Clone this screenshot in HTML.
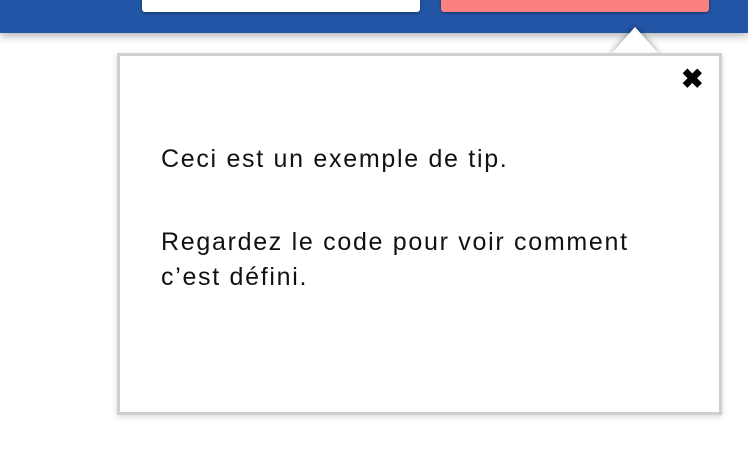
<!DOCTYPE html>
<html><head><meta charset="utf-8"><style>
body{margin:0;width:748px;height:450px;overflow:hidden;background:#fff;position:relative;font-family:"Liberation Sans",sans-serif}
.hdr{position:absolute;left:0;top:0;width:748px;height:33px;background:#2355a7;box-shadow:0 3px 8px rgba(0,0,0,.3)}
.b1{position:absolute;left:142px;top:-4px;width:278px;height:16px;background:#fff;border-radius:3px;box-shadow:0 1px 3px rgba(0,0,0,.4)}
.b2{position:absolute;left:441px;top:-4px;width:268px;height:16px;background:#fb8181;border-radius:3px;box-shadow:0 1px 3px rgba(0,0,0,.4)}
.box{position:absolute;left:117px;top:53px;width:599px;height:356px;background:#fff;border:3px solid #cfcfcf;box-shadow:0 2px 6px rgba(0,0,0,.15)}
.arrow{position:absolute;left:611px;top:27px;width:0;height:0;border-left:24px solid transparent;border-right:24px solid transparent;border-bottom:27px solid #fff;filter:drop-shadow(0 -1px 3px rgba(0,0,0,.35))}
.x{position:absolute;left:681px;top:64px;font-size:27px;font-weight:bold;color:#000;line-height:30px}
.t{position:absolute;left:161px;font-size:25px;letter-spacing:1.7px;color:#111;line-height:35px}
</style></head><body>
<div class="hdr"><div class="b1"></div><div class="b2"></div></div>
<div class="arrow"></div>
<div class="box"></div>
<div class="x">✖</div>
<div class="t" style="top:142px">Ceci est un exemple de tip.</div>
<div class="t" style="top:225px">Regardez le code pour voir comment<br>c’est défini.</div>
</body></html>
